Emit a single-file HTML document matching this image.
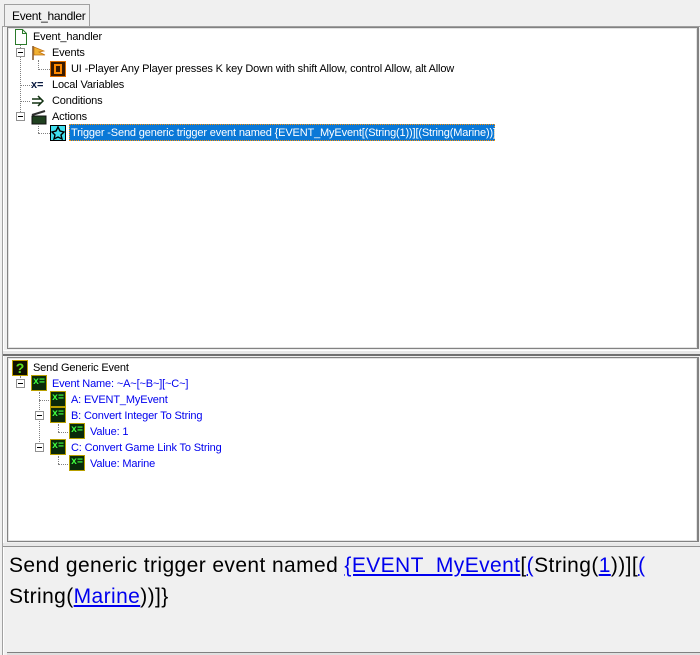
<!DOCTYPE html>
<html><head><meta charset="utf-8"><style>
*{margin:0;padding:0;box-sizing:border-box}
body{width:700px;height:655px;background:#f0f0f0;position:relative;overflow:hidden;font-family:"Liberation Sans",Arial,sans-serif;font-size:11px;color:#000}
.a{position:absolute}
.t{position:absolute;white-space:nowrap;line-height:14px;font-size:11px;letter-spacing:-0.15px}
.b{color:#0000ee}
.ico{position:absolute;width:16px;height:16px}
.box{position:absolute;width:9px;height:9px;border:1px solid #919191;background:#fff}
.box:after{content:"";position:absolute;left:1px;top:3px;width:5px;height:1px;background:#000}
.dv{position:absolute;border-left:1px dotted #808080;width:0}
.dh{position:absolute;border-top:1px dotted #808080;height:0}
.xe{position:absolute;width:16px;height:16px;background:#0a2a0a;border:1px solid #b8a000;color:#40ff40;font-weight:bold;font-size:10px;line-height:13px;text-align:center;font-family:"Liberation Mono",monospace}
</style></head><body>
<div class="a" style="left:4px;top:4px;width:86px;height:23px;background:#f0f0f0;border:1px solid #a0a0a0;border-bottom:none"></div>
<div class="t" style="left:12px;top:9px;font-size:12px;letter-spacing:-0.3px">Event_handler</div>
<div class="a" style="left:2px;top:26px;width:698px;height:629px;border-left:1px solid #a0a0a0;border-top:1px solid #a0a0a0"></div>
<div class="a" style="left:3px;top:27px;width:1px;height:628px;background:#fff"></div>
<div class="a" style="left:7px;top:27px;width:692px;height:322px;background:#fff;border:1px solid #828282;border-right:2px solid #828282"></div>
<div class="a" style="left:8px;top:28px;width:689px;height:320px;border:1px solid #e3e3e3"></div>
<div class="a" style="left:3px;top:350px;width:697px;height:6px;background:#e8e8e8;border-bottom:2px solid #707070;border-top:1px solid #fff"></div>
<div class="a" style="left:7px;top:357px;width:692px;height:185px;background:#fff;border:1px solid #828282;border-right:2px solid #828282"></div>
<div class="a" style="left:8px;top:358px;width:689px;height:183px;border:1px solid #e3e3e3"></div>
<div class="a" style="left:3px;top:543px;width:697px;height:4px;background:#e8e8e8;border-bottom:1px solid #909090"></div>
<div class="a" style="left:7px;top:652px;width:693px;height:3px;border-top:1px solid #808080;background:#e0e0e0"></div>

<svg class="ico" style="left:13px;top:29px" viewBox="0 0 16 16"><path d="M2.5 .5h7l4 4v11h-11z" fill="#fff" stroke="#2a7a2a"/><path d="M9.5 .5v4h4" fill="none" stroke="#2a7a2a"/></svg>
<div class="t" style="left:33px;top:30px">Event_handler</div>
<div class="dv" style="left:20px;top:45px;height:75px"></div>
<div class="box" style="left:16px;top:48px"></div>
<svg class="ico" style="left:31px;top:45px" viewBox="0 0 16 16"><path d="M2 1v14" stroke="#805020" stroke-width="1.5"/><path d="M3 2l10 4-5 1 6 3-11 0z" fill="#f0b030" stroke="#c07010" stroke-width=".7"/></svg>
<div class="t" style="left:52px;top:46px">Events</div>
<div class="dv" style="left:38px;top:60px;height:10px"></div>
<div class="dh" style="left:38px;top:69px;width:12px"></div>
<div class="a" style="left:50px;top:61px;width:16px;height:16px;background:#3a1a00;border:1px solid #e07000"></div>
<div class="a" style="left:54px;top:64px;width:8px;height:10px;border:2px solid #ff8a00"></div>
<div class="t" style="left:71px;top:62px">UI -Player Any Player presses K key Down with shift Allow, control Allow, alt Allow</div>
<div class="dh" style="left:20px;top:85px;width:12px"></div>
<div class="t" style="left:31px;top:78px;font-weight:bold;font-size:11px;color:#0a1a40">x=</div>
<div class="t" style="left:52px;top:78px">Local Variables</div>
<div class="dh" style="left:20px;top:101px;width:10px"></div>
<svg class="ico" style="left:31px;top:93px" viewBox="0 0 16 16"><path d="M1 6h9M1 10h9M7 3l5 5-5 5" fill="none" stroke="#103010" stroke-width="1.5"/></svg>
<div class="t" style="left:52px;top:94px">Conditions</div>
<div class="box" style="left:16px;top:112px"></div>
<svg class="ico" style="left:31px;top:109px" viewBox="0 0 16 16"><rect x="1" y="7" width="14" height="8" fill="#204020" stroke="#101010"/><path d="M1 6l13-4" stroke="#303030" stroke-width="2"/></svg>
<div class="t" style="left:52px;top:110px">Actions</div>
<div class="dv" style="left:38px;top:124px;height:9px"></div>
<div class="dh" style="left:38px;top:133px;width:12px"></div>
<div class="a" style="left:50px;top:125px;width:16px;height:16px;background:#40e0f0;border:1px solid #000"></div>
<svg class="ico" style="left:50px;top:125px" viewBox="0 0 16 16"><path d="M8 2l2 4 4 1-3 3 1 4-4-2-4 2 1-4-3-3 4-1z" fill="none" stroke="#000" stroke-width="1.4"/></svg>
<div class="a" style="left:69px;top:124px;width:426px;height:17px;background:#0a78d7;border:1px dotted #ff9000"></div>
<div class="t" style="left:71px;top:126px;color:#fff">Trigger -Send generic trigger event named {EVENT_MyEvent[(String(1))][(String(Marine))]}</div>

<div class="a" style="left:12px;top:360px;width:16px;height:16px;background:#101000;border:1px solid #c0a000;color:#60e020;font-weight:bold;font-size:14px;line-height:15px;text-align:center">?</div>
<div class="t" style="left:33px;top:361px">Send Generic Event</div>
<div class="dv" style="left:20px;top:376px;height:8px"></div>
<div class="box" style="left:16px;top:379px"></div>
<div class="xe" style="left:31px;top:375px">x=</div>
<div class="t b" style="left:52px;top:377px">Event Name: ~A~[~B~][~C~]</div>
<div class="dv" style="left:39px;top:392px;height:56px"></div>
<div class="dh" style="left:39px;top:400px;width:12px"></div>
<div class="xe" style="left:50px;top:391px">x=</div>
<div class="t b" style="left:71px;top:393px">A: EVENT_MyEvent</div>
<div class="box" style="left:35px;top:411px"></div>
<div class="xe" style="left:50px;top:407px">x=</div>
<div class="t b" style="left:71px;top:409px">B: Convert Integer To String</div>
<div class="dv" style="left:58px;top:424px;height:8px"></div>
<div class="dh" style="left:58px;top:432px;width:12px"></div>
<div class="xe" style="left:69px;top:423px">x=</div>
<div class="t b" style="left:90px;top:425px">Value: 1</div>
<div class="box" style="left:35px;top:443px"></div>
<div class="xe" style="left:50px;top:439px">x=</div>
<div class="t b" style="left:71px;top:441px">C: Convert Game Link To String</div>
<div class="dv" style="left:58px;top:456px;height:8px"></div>
<div class="dh" style="left:58px;top:464px;width:12px"></div>
<div class="xe" style="left:69px;top:455px">x=</div>
<div class="t b" style="left:90px;top:457px">Value: Marine</div>

<div class="a" style="left:9px;top:550px;font-size:21px;letter-spacing:0.4px;line-height:31px;white-space:nowrap">Send generic trigger event named <u class="b">{EVENT_MyEvent</u>[<u class="b">(</u>String(<u class="b">1</u>))][<u class="b">(</u><br>String(<u class="b">Marine</u>))]}</div>
</body></html>
